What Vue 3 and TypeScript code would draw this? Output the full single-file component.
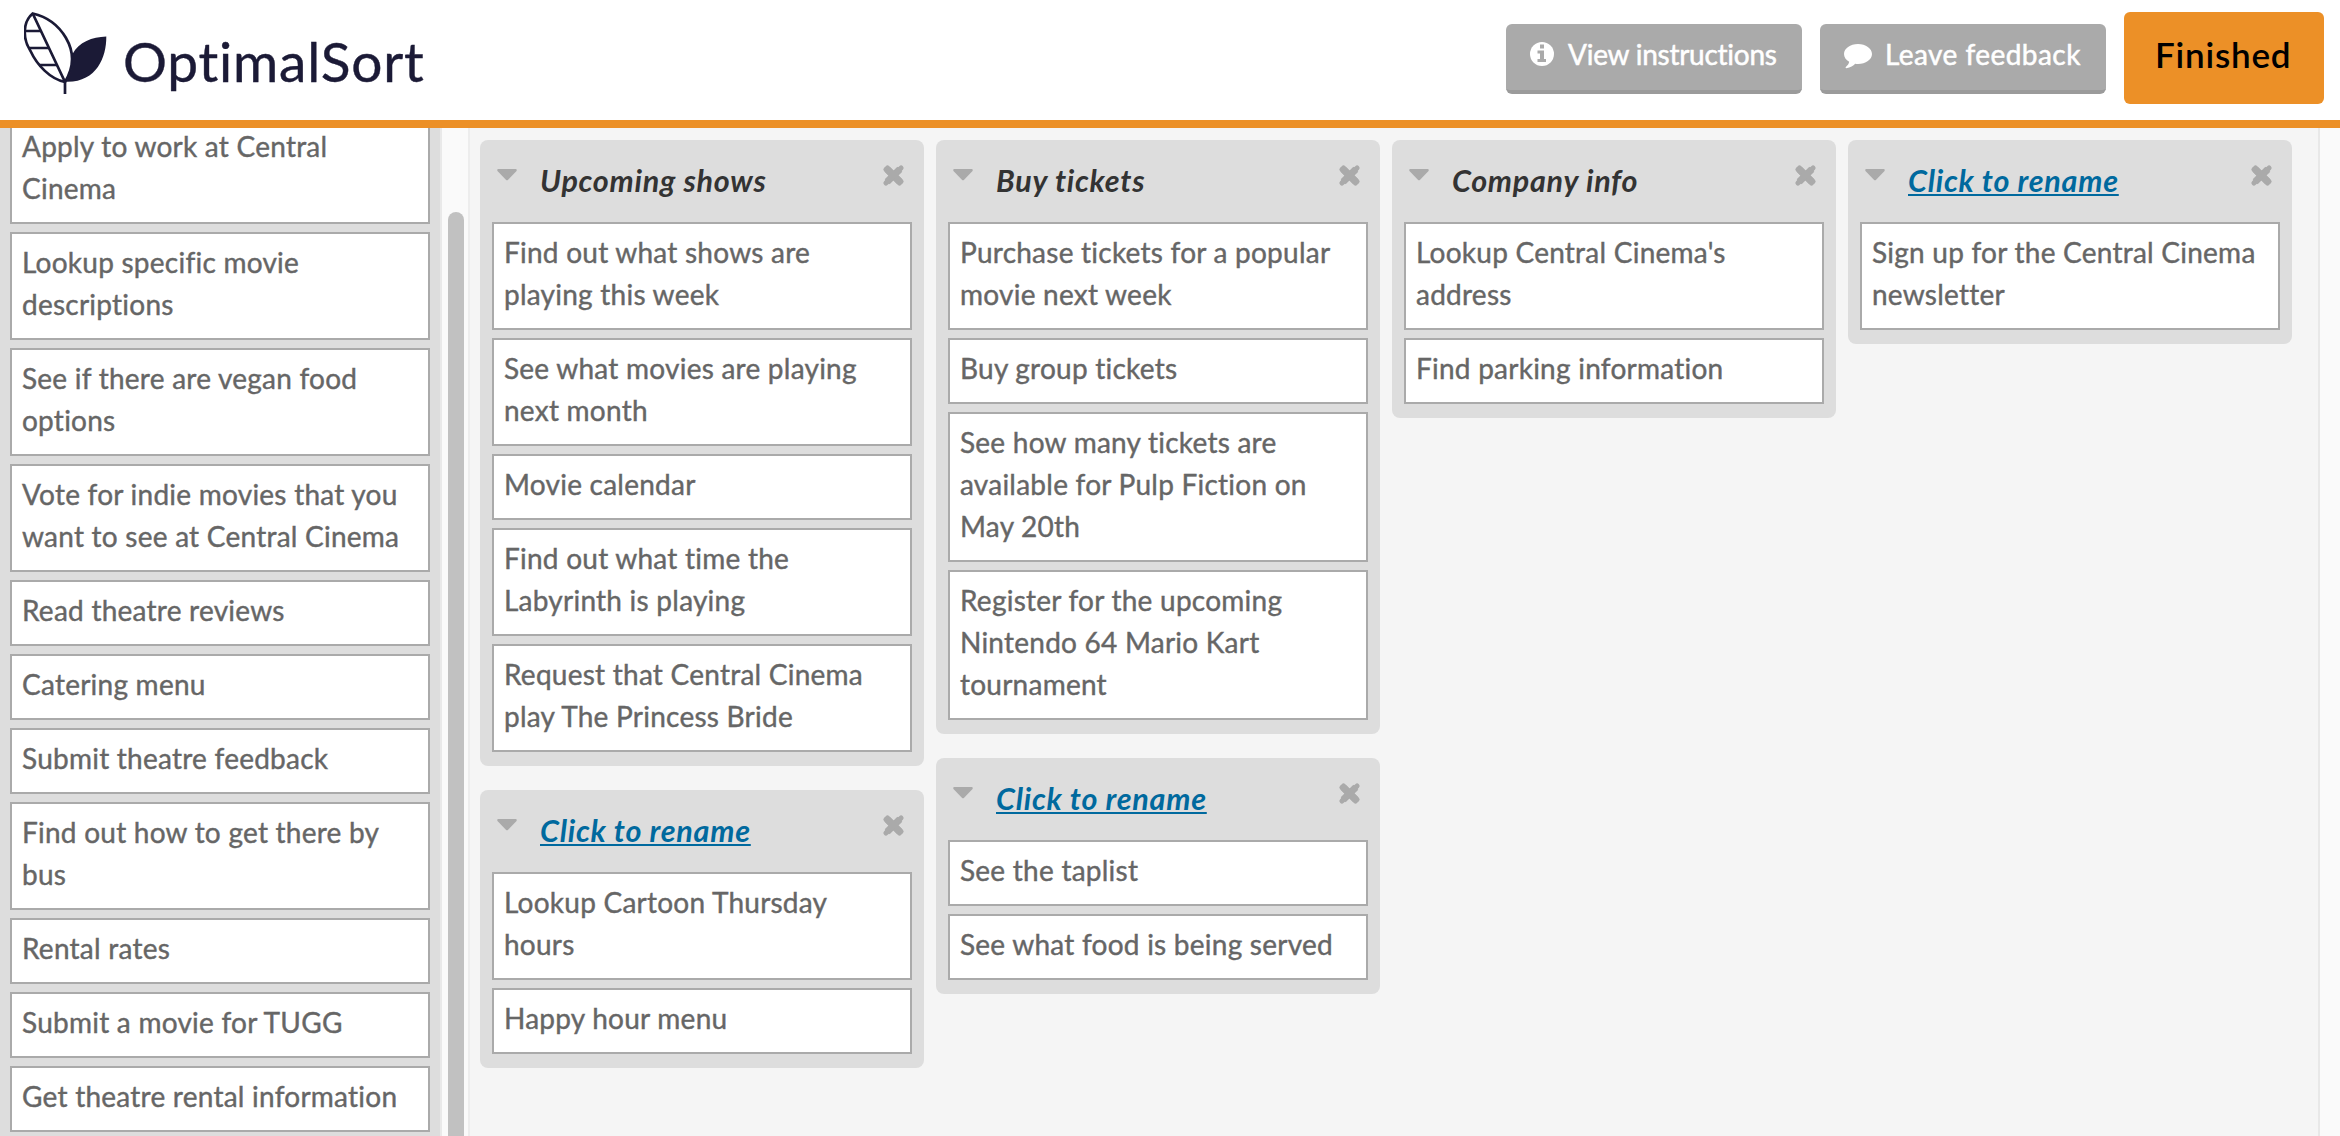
<script setup lang="ts">
interface Group {
  title: string
  named: boolean
  cards: string[][]
}

const unsorted: string[][] = [
  ['Apply to work at Central', 'Cinema'],
  ['Lookup specific movie', 'descriptions'],
  ['See if there are vegan food', 'options'],
  ['Vote for indie movies that you', 'want to see at Central Cinema'],
  ['Read theatre reviews'],
  ['Catering menu'],
  ['Submit theatre feedback'],
  ['Find out how to get there by', 'bus'],
  ['Rental rates'],
  ['Submit a movie for TUGG'],
  ['Get theatre rental information'],
]

const columns: Group[][] = [
  [
    {
      title: 'Upcoming shows',
      named: true,
      cards: [
        ['Find out what shows are', 'playing this week'],
        ['See what movies are playing', 'next month'],
        ['Movie calendar'],
        ['Find out what time the', 'Labyrinth is playing'],
        ['Request that Central Cinema', 'play The Princess Bride'],
      ],
    },
    {
      title: 'Click to rename',
      named: false,
      cards: [['Lookup Cartoon Thursday', 'hours'], ['Happy hour menu']],
    },
  ],
  [
    {
      title: 'Buy tickets',
      named: true,
      cards: [
        ['Purchase tickets for a popular', 'movie next week'],
        ['Buy group tickets'],
        ['See how many tickets are', 'available for Pulp Fiction on', 'May 20th'],
        ['Register for the upcoming', 'Nintendo 64 Mario Kart', 'tournament'],
      ],
    },
    {
      title: 'Click to rename',
      named: false,
      cards: [['See the taplist'], ['See what food is being served']],
    },
  ],
  [
    {
      title: 'Company info',
      named: true,
      cards: [["Lookup Central Cinema's", 'address'], ['Find parking information']],
    },
  ],
  [
    {
      title: 'Click to rename',
      named: false,
      cards: [['Sign up for the Central Cinema', 'newsletter']],
    },
  ],
]
</script>

<template>
  <div class="page">
    <header class="header">
      <div class="brand">
        <svg class="mark" width="86" height="84" viewBox="0 0 86 84" fill="none" stroke="#1b1a36" stroke-width="2.700">
          <path d="M8.700 1.500C-1.500 10-1.500 27 6.500 39C13 53 26 67 41 70C52 52 49 38 42 26C35 14 24 5 8.700 1.500Z" />
          <path d="M8.700 1.500L41 70V82" />
          <path d="M1.500 19H17M5 36H25M15 53H33" />
          <path d="M41.500 69.700C46 64 49.500 54 48.500 42C55 30 68 25 82.300 24.500C82.500 46 72 71 41.500 69.700Z" fill="#1b1a36" stroke="none" />
        </svg>
        <span class="name">OptimalSort</span>
      </div>
      <div class="actions">
        <button class="btn">
          <svg class="icon" width="24" height="24" viewBox="0 0 24 24">
            <circle cx="12" cy="12" r="12" fill="#fff" />
            <path d="M10 2.500h4v4h-4zM7.500 8.500H14v8.500h2v3H7.500v-3H10v-5.500H7.500z" fill="#aaa" />
          </svg>
          <span class="label view">View instructions</span>
        </button>
        <button class="btn">
          <svg class="icon talk" width="28" height="25" viewBox="0 0 28 25">
            <path d="M14 0C6.300 0 0 4.500 0 10c0 3.200 2 6 5.200 7.800C4.800 20 3.500 21.600 1.800 23c-.5.500-.2 1.200.5 1.200 4.200-.5 7-2.200 8.900-4.400.9.100 1.800.2 2.800.2 7.700 0 14-4.500 14-10S21.700 0 14 0z" fill="#fff" />
          </svg>
          <span class="label leave">Leave feedback</span>
        </button>
        <button class="btn done"><span class="label fin">Finished</span></button>
      </div>
    </header>
    <main class="body">
      <aside class="side">
        <div v-for="(card, i) in unsorted" :key="i" class="card">
          <div v-for="line in card" :key="line" class="line">{{ line }}</div>
        </div>
      </aside>
      <div class="track"><div class="thumb"></div></div>
      <section class="board">
        <div v-for="(col, c) in columns" :key="c" class="col">
          <div v-for="(group, g) in col" :key="g" class="group">
            <div class="head">
              <svg class="caret" width="20" height="12" viewBox="0 0 20 12">
                <path d="M1.500 0h17c1.200 0 1.700 1.300.8 2.200l-8.200 8.600c-.6.700-1.500.7-2.200 0L.7 2.200C-.2 1.300.3 0 1.500 0z" fill="#aaa" />
              </svg>
              <span class="title"><span :class="{ link: !group.named }">{{ group.title }}</span></span>
              <svg class="close" width="23" height="23" viewBox="0 0 23 23">
                <path d="M5.200 5.200L17.800 17.800M17.800 5.200L5.200 17.800" stroke="#aaa" stroke-width="7" />
                <path d="M4.700 4.700L18.300 18.300M18.300 4.700L4.700 18.300" stroke="#aaa" stroke-width="5" stroke-linecap="round" transform="translate(-.8 .8)" />
                <path d="M4.700 4.700L18.300 18.300M18.300 4.700L4.700 18.300" stroke="#aaa" stroke-width="5" stroke-linecap="round" transform="translate(.8 -.8)" />
              </svg>
            </div>
            <div v-for="(card, i) in group.cards" :key="i" class="card">
              <div v-for="line in card" :key="line" class="line">{{ line }}</div>
            </div>
          </div>
        </div>
      </section>
      <div class="edge"></div>
    </main>
  </div>
</template>

<style>
body {
  margin: 0;
  overflow: hidden;
}
</style>

<style scoped>
.page {
  width: 2340px;
  height: 1136px;
  display: flex;
  flex-direction: column;
  overflow: hidden;
  background: #f5f5f5;
  font-family: Lato, "Open Sans", sans-serif;
  font-variant-ligatures: none;
}
.header {
  height: 120px;
  flex: none;
  display: flex;
  justify-content: space-between;
  background: #fff;
  border-bottom: 8px solid #ec9027;
}
.brand {
  display: flex;
  padding: 12px 0 0 24px;
}
.mark {
  flex: none;
}
.name {
  margin: 16px 0 0 13px;
  font-size: 55px;
  line-height: 66px;
  letter-spacing: 0.8px;
  color: #1b1a36;
  -webkit-text-stroke: 0.4px #1b1a36;
  white-space: nowrap;
}
.actions {
  display: flex;
  gap: 18px;
  padding: 12px 16px 0 0;
}
.btn {
  box-sizing: border-box;
  display: flex;
  height: 70px;
  margin: 12px 0 0;
  padding: 18px 0 0 24px;
  border: 0;
  border-bottom: 4px solid #9b9b9b;
  border-radius: 6px;
  background: #aaa;
  color: #fff;
  font-family: inherit;
  font-size: 28px;
  line-height: 34px;
  font-variant-ligatures: none;
}
.btn:first-child {
  width: 296px;
}
.btn:nth-child(2) {
  width: 286px;
}
.icon {
  flex: none;
}
.talk {
  margin-top: 2px;
}
.label {
  margin: -5px 0 0 14px;
  white-space: nowrap;
  -webkit-text-stroke: 0.5px currentColor;
}
.view {
  letter-spacing: -0.25px;
}
.leave {
  margin-left: 13px;
  letter-spacing: 0.45px;
}
.btn.done {
  width: 200px;
  height: 92px;
  margin: 0;
  padding: 21px 0 0 31px;
  border: 0;
  background: #ec9027;
  color: #000;
  font-size: 35px;
  line-height: 42px;
  font-weight: 600;
}
.fin {
  margin: 0;
  letter-spacing: 0.8px;
  -webkit-text-stroke: 0;
}
.body {
  flex: 1;
  min-height: 0;
  display: flex;
  overflow: hidden;
}
.side {
  flex: none;
  width: 420px;
  margin-top: -12px;
  padding: 0 10px;
  background: #ddd;
  border-right: 2px solid #e9e9e9;
}
.card {
  box-sizing: border-box;
  padding: 7px 8px 13px 10px;
  border: 2px solid #aaa;
  background: #fff;
  color: #666;
  font-size: 28px;
  line-height: 42px;
  letter-spacing: 0.24px;
  -webkit-text-stroke: 0.4px #666;
}
.card + .card {
  margin-top: 8px;
}
.line {
  white-space: nowrap;
}
.track {
  box-sizing: border-box;
  flex: none;
  width: 28px;
  padding: 84px 4px 0 6px;
  border-right: 2px solid #ededed;
  background: #fafafa;
}
.thumb {
  width: 16px;
  height: 1000px;
  border-radius: 8px;
  background: #c1c1c1;
}
.board {
  flex: 1;
  display: flex;
  align-items: flex-start;
  gap: 12px;
  padding: 12px 0 0 10px;
}
.col {
  width: 444px;
  display: flex;
  flex-direction: column;
  gap: 24px;
}
.group {
  padding: 0 12px 14px;
  border-radius: 8px;
  background: #ddd;
}
.head {
  display: flex;
  align-items: flex-start;
  height: 82px;
}
.caret {
  margin: 29px 0 0 5px;
}
.title {
  flex: 1;
  margin: 19px 0 0 23px;
  font-size: 30.500px;
  line-height: 42px;
  letter-spacing: 0.75px;
  font-weight: 700;
  font-style: italic;
  color: #333;
  white-space: nowrap;
}
.link {
  color: #00699e;
  text-decoration: underline;
  text-decoration-thickness: 2px;
  text-underline-offset: 2px;
  text-decoration-skip-ink: none;
}
.close {
  margin: 24px 7px 0 0;
}
.edge {
  flex: none;
  width: 20px;
  border-left: 2px solid #e8e8e8;
  background: #fafafa;
}
</style>
